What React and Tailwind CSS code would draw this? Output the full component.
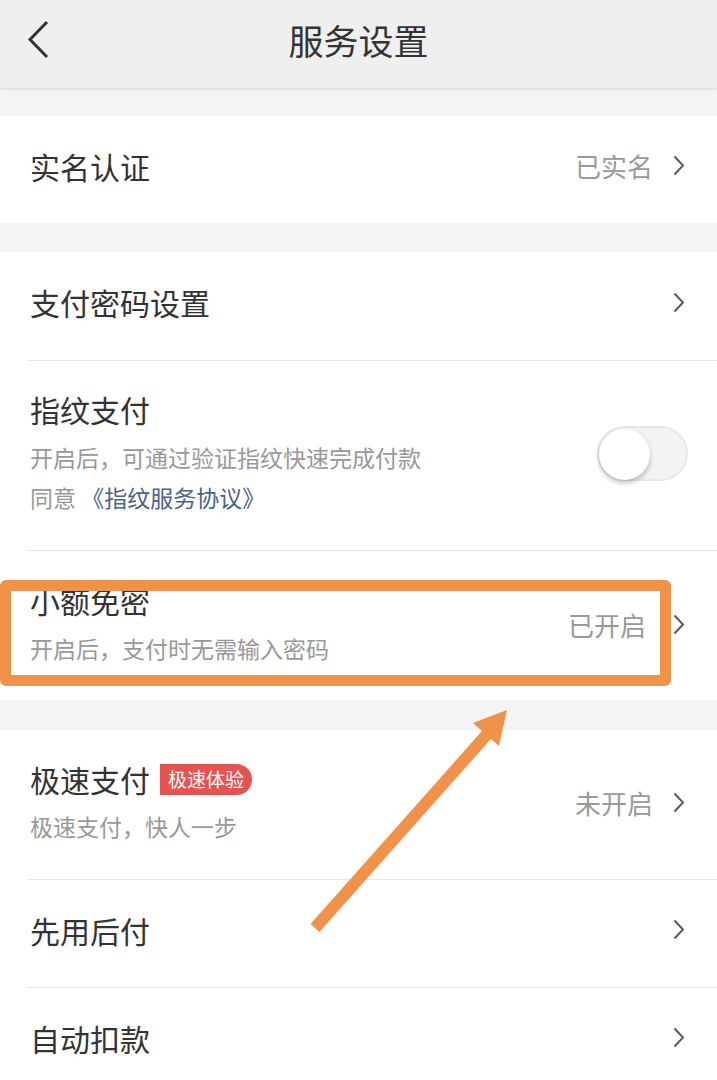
import React from "react";

const font = { fontFamily: '"Noto Sans CJK SC", "Noto Sans", sans-serif' };

function Chevron() {
  return (
    <svg width="12" height="21" viewBox="0 0 12 21" className="shrink-0">
      <path d="M1.5 1.5 L10 10.5 L1.5 19.5" fill="none" stroke="#5a5a5a" strokeWidth="2" strokeLinejoin="miter" />
    </svg>
  );
}

function Divider() {
  return <div className="ml-[28px] h-px bg-[#e6e6e6]" />;
}

function Row({ title, value, height = "h-[107px]" }) {
  return (
    <div className={`flex items-center justify-between pl-[30px] pr-[32px] pb-[8px] ${height}`}>
      <span className="text-[30px] leading-[40px] text-[#333]">{title}</span>
      <div className="flex items-center gap-[20px]">
        {value && <span className="text-[26px] text-[#999]">{value}</span>}
        <Chevron />
      </div>
    </div>
  );
}

function Toggle() {
  return (
    <div className="relative w-[91px] h-[55px] rounded-full bg-[#f3f3f3] border-2 border-[#e8e8e8]">
      <div className="absolute left-0 top-[1px] w-[51px] h-[51px] rounded-full bg-white shadow-[0_3px_5px_rgba(0,0,0,0.25)]" />
    </div>
  );
}

export default function App() {
  return (
    <div className="relative w-[717px] h-[1080px] overflow-hidden bg-[#f4f4f4]" style={font}>
      {/* Header */}
      <div className="relative h-[88px] pb-[8px] bg-[#efefef] flex items-center justify-center shadow-[0_1px_3px_rgba(0,0,0,0.12)] z-10">
        <svg width="24" height="40" viewBox="0 0 24 40" className="absolute left-[26px] top-[20px]">
          <path d="M21 2 L4 19.5 L21 37" fill="none" stroke="#333" strokeWidth="3" />
        </svg>
        <span className="text-[35px] text-[#333]">服务设置</span>
      </div>

      <div className="h-[28px]" />

      <div className="bg-white">
        <Row title="实名认证" value="已实名" />
      </div>

      <div className="h-[29px]" />

      <div className="bg-white">
        <Row title="支付密码设置" height="h-[108px]" />
        <Divider />

        {/* 指纹支付 */}
        <div className="flex items-center justify-between pl-[30px] pr-[29px] pt-[28px] pb-[33px]">
          <div className="flex flex-col">
            <span className="text-[30px] leading-[40px] text-[#333]">指纹支付</span>
            <span className="mt-[8px] text-[23px] leading-[40px] text-[#999]">开启后，可通过验证指纹快速完成付款</span>
            <span className="text-[23px] leading-[40px] text-[#999]">
              同意 <span className="text-[#4b6190]">《指纹服务协议》</span>
            </span>
          </div>
          <Toggle />
        </div>
        <Divider />

        {/* 小额免密 */}
        <div className="flex items-center justify-between pl-[30px] pr-[32px] pt-[29px] pb-[32px]">
          <div className="flex flex-col">
            <span className="text-[30px] leading-[40px] text-[#333]">小额免密</span>
            <span className="mt-[8px] text-[23px] leading-[40px] text-[#999]">开启后，支付时无需输入密码</span>
          </div>
          <div className="flex items-center gap-[27px]">
            <span className="text-[26px] text-[#999]">已开启</span>
            <Chevron />
          </div>
        </div>
      </div>

      <div className="h-[30px]" />

      <div className="bg-white">
        {/* 极速支付 */}
        <div className="flex items-center justify-between pl-[30px] pr-[32px] pt-[29px] pb-[33px]">
          <div className="flex flex-col">
            <div className="flex items-center gap-[10px]">
              <span className="text-[30px] leading-[40px] text-[#333]">极速支付</span>
              <span className="h-[31px] px-[8px] flex items-center bg-[#e5524f] text-white text-[19px] rounded-tl-[12px] rounded-r-full">
                极速体验
              </span>
            </div>
            <span className="mt-[7px] text-[23px] leading-[40px] text-[#999]">极速支付，快人一步</span>
          </div>
          <div className="flex items-center gap-[20px]">
            <span className="text-[26px] text-[#999]">未开启</span>
            <Chevron />
          </div>
        </div>
        <Divider />
        <Row title="先用后付" />
        <Divider />
        <Row title="自动扣款" />
      </div>

      {/* annotation box */}
      <div className="absolute left-0 top-[580px] w-[671px] h-[106px] border-[11px] border-[#f0924a] rounded-[6px] z-20" />

      {/* annotation arrow */}
      <svg className="absolute left-0 top-0 z-20" width="717" height="1080" viewBox="0 0 717 1080">
        <line x1="315" y1="928" x2="490" y2="731" stroke="#f0924a" strokeWidth="12" />
        <polygon points="507,710 473,723 499,746" fill="#f0924a" />
      </svg>
    </div>
  );
}
